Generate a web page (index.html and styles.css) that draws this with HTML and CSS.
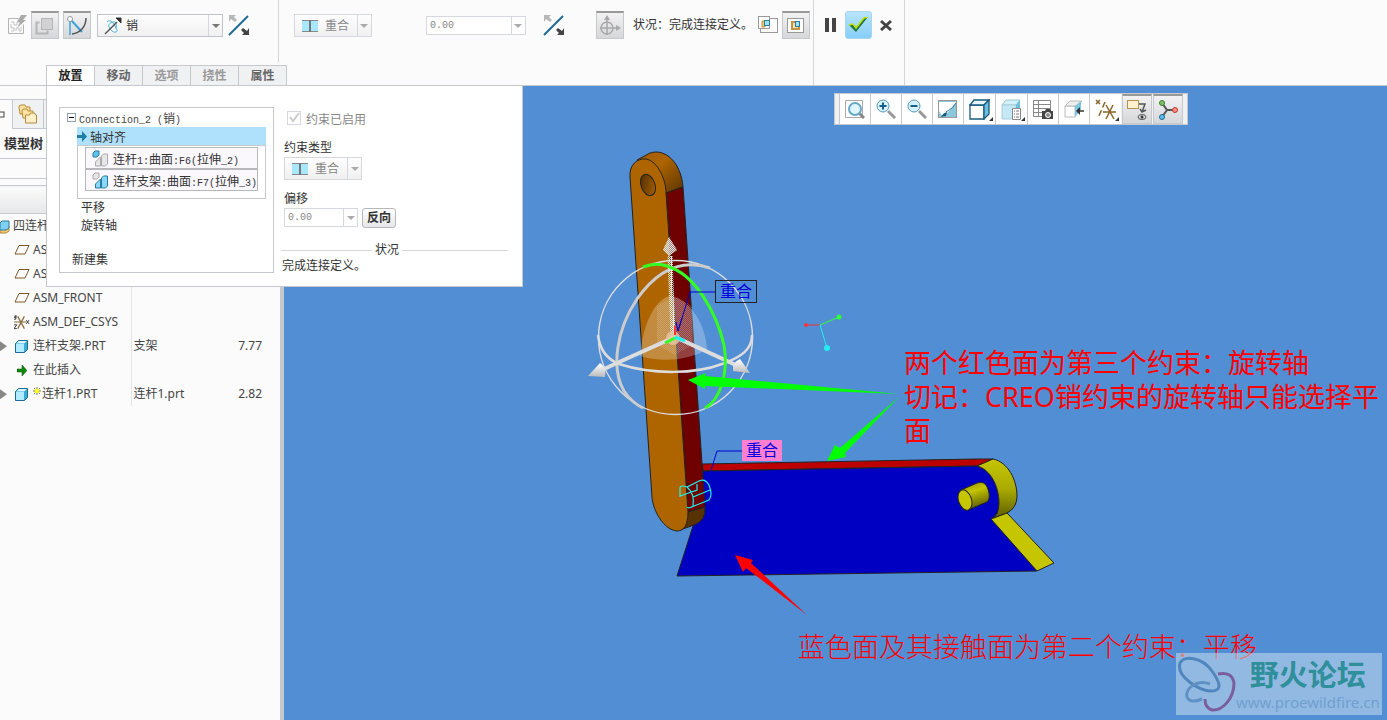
FILE: index.html
```html
<!DOCTYPE html>
<html lang="zh-CN">
<head>
    <meta charset="UTF-8">
    <meta name="viewport" content="width=device-width, initial-scale=1.0">
    <title>元件放置</title>
    <link rel="stylesheet" href="styles.css">
</head>
<body>
    <!-- 操控板 -->
    <header class="ribbon">
        <div class="dash">
            <div class="tools">
                <div class="tool-group first">
                    <button class="tool flat" type="button" aria-label="使用界面放置" disabled>
                        <svg width="20" height="20" viewBox="0 0 20 20" fill="none" stroke="#b4b4b4"><path d="M1.500 3.500h10M1.500 3.500v15h15v-9"/><path d="M4 7h3v3h3V7h3M4 16h3v-3H4V9M9 16v-3h3v3h2v-4" stroke="#c4c4c4"/><path d="M14 0h6l-4 5h3l-9 8 3-6h-3z" fill="#aaa" stroke="none"/></svg>
                    </button>
                    <button class="tool on" type="button" aria-label="手动放置">
                        <svg width="20" height="20" viewBox="0 0 20 20" fill="none" stroke="#b5b5b8"><path d="M4.500 6.500h-3v11h11v-3" stroke-width="2"/><rect x="6.500" y="2.500" width="11" height="11" fill="#d2d2d5"/></svg>
                    </button>
                    <button class="tool on" type="button" aria-label="机构连接">
                        <svg width="20" height="20" viewBox="0 0 20 20" fill="none"><path d="M3 5v14" stroke="#35a5d8" stroke-width="1.500"/><path d="M4 4l11 12" stroke="#35a5d8" stroke-width="2"/><path d="M19 2c0 9-6 15-14 16" stroke="#555" stroke-width="1.500"/><circle cx="3" cy="3" r="2.500" fill="#fff" stroke="#999"/></svg>
                    </button>
                    <div class="combo joint">
                        <svg width="18" height="18" viewBox="0 0 18 18" fill="none"><path d="M3 5c3-3 6 0 8 4s3 5 1 6-6-2-7-5 1-4 4-5 4 3 3 7" stroke="#4ab4dc"/><path d="M1 17L13 5" stroke="#555" stroke-width="1.500"/><path d="M12 1h5v5z" fill="#333" stroke="#333"/></svg>
                        <select aria-label="连接类型"><option>销</option></select>
                        <span class="arrow"></span>
                    </div>
                    <button class="tool flat" type="button" aria-label="反向">
                        <svg width="22" height="22" viewBox="0 0 22 22"><path d="M1 21L20 2" stroke="#1d6a92" stroke-width="2"/><path d="M1 1h7L6 3l3 3-2 2-4-3-2 3z" fill="#b8b8b8"/><path d="M21 21h-7l2-2-3-3 2-2 4 3 2-3z" fill="#444"/></svg>
                    </button>
                </div>
                <div class="tool-group">
                    <div class="combo coincide">
                        <svg width="16" height="12" viewBox="0 0 16 12"><path d="M0 0h16v12H0z" fill="#a8e8ff"/><path d="M0 .5h16M0 11.500h16" stroke="#888"/><path d="M8 0v12" stroke="#777" stroke-width="2"/></svg>
                        <select aria-label="约束类型" disabled><option>重合</option></select>
                        <span class="arrow"></span>
                    </div>
                    <div class="combo offset">
                        <input type="text" value="0.00" aria-label="偏移值" disabled>
                        <span class="arrow"></span>
                    </div>
                    <button class="tool flat" type="button" aria-label="反向约束">
                        <svg width="22" height="22" viewBox="0 0 22 22"><path d="M1 21L20 2" stroke="#1d6a92" stroke-width="2"/><path d="M1 1h7L6 3l3 3-2 2-4-3-2 3z" fill="#b8b8b8"/><path d="M21 21h-7l2-2-3-3 2-2 4 3 2-3z" fill="#444"/></svg>
                    </button>
                    <button class="tool on dragger" type="button" aria-label="3D 拖动器">
                        <svg width="22" height="22" viewBox="0 0 22 22" fill="none" stroke="#a8a8ab" stroke-width="1.500"><circle cx="8" cy="13" r="6"/><path d="M8 2v18M1 13h18"/><path d="M5 5l3-5 3 5zM17 10l5 3-5 3z" fill="#a8a8ab" stroke="none"/></svg>
                    </button>
                    <span class="status">状况：完成连接定义。</span>
                    <button class="tool flat small" type="button" aria-label="单独窗口">
                        <svg width="20" height="20" viewBox="0 0 20 20" stroke="#999"><rect x="2.500" y="3.500" width="17" height="14" fill="#fff"/><rect x=".5" y="1.500" width="11" height="12" fill="#fff"/><path d="M4 6h3v6H4z" fill="#f5c56b" stroke="#c79245"/><rect x="6.500" y="5.500" width="5" height="5" fill="#9fe3fa" stroke="#2b7d9e"/></svg>
                    </button>
                    <button class="tool on" type="button" aria-label="主窗口">
                        <svg width="20" height="20" viewBox="0 0 20 20"><rect x="1.500" y="2.500" width="16" height="14" fill="#fff" stroke="#999"/><rect x="6" y="6" width="7" height="7" fill="#ffe0a0" stroke="#c79245" stroke-width="2"/><rect x="9.500" y="5.500" width="4" height="5" fill="#9fe3fa" stroke="#2b7d9e"/></svg>
                    </button>
                </div>
            </div>
            <nav class="tabs" role="tablist">
                <button type="button" role="tab" class="active" aria-selected="true">放置</button>
                <button type="button" role="tab">移动</button>
                <button type="button" role="tab" disabled>选项</button>
                <button type="button" role="tab" disabled>挠性</button>
                <button type="button" role="tab">属性</button>
            </nav>
        </div>
        <div class="actions">
            <button type="button" aria-label="暂停"><svg width="12" height="14" viewBox="0 0 12 14"><path d="M0 0h4v14H0zM7 0h4v14H7z" fill="#444"/></svg></button>
            <button type="button" class="ok" aria-label="确定"><svg width="20" height="16" viewBox="0 0 20 16"><path d="M1 8l4-1 3 3 8-9 4-1L8 15z" fill="#1f7a43"/><path d="M1 8l4-1 3 4 8-10 4-1" fill="none" stroke="#c5e000" stroke-width="1.500"/></svg></button>
            <button type="button" aria-label="取消"><svg width="12" height="12" viewBox="0 0 12 12"><path d="M1 2l10 9M11 2L1 11" stroke="#444" stroke-width="3"/></svg></button>
        </div>

        <!-- 放置面板 -->
        <section class="placement">
            <div class="sets">
                <div class="set-head">
                    <svg width="9" height="9" viewBox="0 0 9 9"><rect x=".5" y=".5" width="8" height="8" fill="#fff" stroke="#8ba0b5"/><path d="M2 4.500h5" stroke="#000"/></svg>
                    <span><span class="lat">Connection_2 (</span>销<span class="lat">)</span></span>
                </div>
                <div class="selected">
                    <svg width="10" height="11" viewBox="0 0 10 11"><path d="M0 4h5V0l5 5.500L5 11V7H0z" fill="#1d7fa3"/></svg>
                    轴对齐
                </div>
                <ul class="refs">
                    <li>
                        <svg width="17" height="17" viewBox="0 0 17 17"><path d="M1 3l2-2h4v4L5 7H1z" fill="#5cc4ee" stroke="#2b7d9e"/><path d="M3.500 16v-4l5-5v9zM9.500 16V6l2-2h4v10l-2 2z" fill="#e6e6e6" stroke="#aaa"/></svg>
                        <span>连杆<span class="lat">1:</span>曲面<span class="lat">:F6(</span>拉伸<span class="lat">_2)</span></span>
                    </li>
                    <li>
                        <svg width="17" height="17" viewBox="0 0 17 17"><path d="M1 3l2-2h4v4L5 7H1z" fill="#e6e6e6" stroke="#aaa"/><path d="M3.500 16v-4l5-5v9zM9.500 16V6l2-2h4v10l-2 2z" fill="#8ad8f8" stroke="#2b7d9e"/></svg>
                        <span>连杆支架<span class="lat">:</span>曲面<span class="lat">:F7(</span>拉伸<span class="lat">_3)</span></span>
                    </li>
                </ul>
                <div class="entry">平移</div>
                <div class="entry">旋转轴</div>
                <div class="new-set">新建集</div>
            </div>
            <div class="params">
                <label class="enabled"><input type="checkbox" checked disabled>约束已启用</label>
                <label class="caption" for="constraintType">约束类型</label>
                <div class="combo coincide">
                    <svg width="16" height="12" viewBox="0 0 16 12"><path d="M0 0h16v12H0z" fill="#a8e8ff"/><path d="M0 .5h16M0 11.500h16" stroke="#888"/><path d="M8 0v12" stroke="#777" stroke-width="2"/></svg>
                    <select id="constraintType" disabled><option>重合</option></select>
                    <span class="arrow"></span>
                </div>
                <label class="caption second" for="offsetValue">偏移</label>
                <div class="offset-row">
                    <div class="combo offset">
                        <input type="text" id="offsetValue" value="0.00" disabled>
                        <span class="arrow"></span>
                    </div>
                    <button type="button" class="flip">反向</button>
                </div>
                <div class="rule">状况</div>
                <p class="result">完成连接定义。</p>
            </div>
        </section>
    </header>

    <main class="workspace">
        <!-- 模型树 -->
        <aside class="tree">
            <div class="tree-tabs">
                <button type="button" class="current" aria-label="模型树"><svg width="6" height="7" viewBox="0 0 6 7"><rect x="-1" y="1" width="5" height="5" fill="#fff" stroke="#444"/></svg></button>
                <button type="button" aria-label="文件夹浏览器">
                    <svg width="20" height="20" viewBox="0 0 20 20" fill="#ffe3a0" stroke="#b58a3c"><path d="M1 3q0-2 2-2h4l1 2h4v7H2z"/><path d="M4 7q0-2 2-2h3l1 2h5v7H5z"/><path d="M7.500 11h4l1-2h4l1 2h1v8h-11z" fill="#fff0c8"/></svg>
                </button>
                <button type="button" aria-label="收藏夹"></button>
            </div>
            <h2>模型树</h2>
            <div class="filter"></div>
            <table>
                <thead><tr><th></th><th></th><th></th></tr></thead>
                <tbody>
                    <tr>
                        <td class="root"><svg width="10" height="14" viewBox="0 0 10 14"><path d="M0 9h6l3-3v5l-3 2H0z" fill="#f5c56b" stroke="#b58a3c"/><path d="M0 3l2-2h7v7L6 10H0z" fill="#7fd0f2" stroke="#2b7d9e"/></svg>四连杆</td>
                        <td></td><td></td>
                    </tr>
                    <tr>
                        <td><svg class="plane" width="16" height="10" viewBox="0 0 16 10"><path d="M5 .5h10L11 9H1z" fill="none" stroke="#7a5a2a"/></svg>AS</td>
                        <td></td><td></td>
                    </tr>
                    <tr>
                        <td><svg class="plane" width="16" height="10" viewBox="0 0 16 10"><path d="M5 .5h10L11 9H1z" fill="none" stroke="#7a5a2a"/></svg>AS</td>
                        <td></td><td></td>
                    </tr>
                    <tr>
                        <td><svg class="plane" width="16" height="10" viewBox="0 0 16 10"><path d="M5 .5h10L11 9H1z" fill="none" stroke="#7a5a2a"/></svg>ASM_FRONT</td>
                        <td></td><td></td>
                    </tr>
                    <tr>
                        <td><svg class="plane" width="16" height="16" viewBox="0 0 17 16" fill="none"><path d="M0 8h13M4 2l7 13M11 2L4 15" stroke="#8a6a3a" stroke-width="1.300"/><path d="M0 1v2h2V1v4H0M0 11h3l-3 4h3M13 6l3 4M16 6l-3 4" stroke="#333"/></svg>ASM_DEF_CSYS</td>
                        <td></td><td></td>
                    </tr>
                    <tr>
                        <td><button type="button" class="expand" aria-label="展开"></button><svg class="part" width="13" height="13" viewBox="0 0 13 13"><path d="M.5 3.500l3-3h9v9l-3 3h-9z" fill="#3aa8d8" stroke="#1d6a92"/><path d="M1 4h8v8H1z" fill="#b0ecff"/><path d="M1 3.500L4 1h8L9 3.500z" fill="#d8f6ff"/></svg>连杆支架.PRT</td>
                        <td>支架</td><td>7.77</td>
                    </tr>
                    <tr>
                        <td><svg class="insert" width="10" height="11" viewBox="0 0 10 11"><path d="M0 4h5V0l5 5.500L5 11V7H0z" fill="#0a8a0a" stroke="#054d05" stroke-width=".5"/></svg>在此插入</td>
                        <td></td><td></td>
                    </tr>
                    <tr>
                        <td><button type="button" class="expand" aria-label="展开"></button><svg class="part" width="13" height="13" viewBox="0 0 13 13"><path d="M.5 3.500l3-3h9v9l-3 3h-9z" fill="#3aa8d8" stroke="#1d6a92"/><path d="M1 4h8v8H1z" fill="#b0ecff"/><path d="M1 3.500L4 1h8L9 3.500z" fill="#d8f6ff"/></svg><svg class="star" width="9" height="14" viewBox="0 0 9 14"><path d="M4 0v8M0 4h8M1 1l6 6M7 1L1 7" stroke="#777"/><path d="M2 2h4v4H2z" fill="#ff0"/></svg>连杆1.PRT</td>
                        <td>连杆1.prt</td><td>2.82</td>
                    </tr>
                </tbody>
            </table>
        </aside>

        <!-- 图形窗口 -->
        <section class="viewport">
            <svg class="scene" width="1103" height="634" viewBox="284 86 1103 634">
                <defs>
                    <linearGradient id="rim" x1="0" y1="0" x2="1" y2="1"><stop offset="0" stop-color="#a05c00"/><stop offset=".4" stop-color="#ae6500"/><stop offset="1" stop-color="#5a3400"/></linearGradient>
                    <linearGradient id="boss" x1="0" y1="0" x2="0" y2="1"><stop offset="0" stop-color="#c5c500"/><stop offset=".5" stop-color="#aaaa00"/><stop offset="1" stop-color="#5c5c00"/></linearGradient>
                    <linearGradient id="peg" x1="0" y1="0" x2=".3" y2="1"><stop offset="0" stop-color="#8a8a00"/><stop offset=".4" stop-color="#c5c500"/><stop offset="1" stop-color="#606000"/></linearGradient>
                    <linearGradient id="hole" x1="0" y1="0" x2="1" y2="1"><stop offset="0" stop-color="#4a2a00"/><stop offset="1" stop-color="#ae6500"/></linearGradient>
                    <linearGradient id="cone" x1="0" y1="0" x2="0" y2="1"><stop offset="0" stop-color="#fff"/><stop offset="1" stop-color="#bbb"/></linearGradient>
                    <pattern id="dots" width="2" height="2" patternUnits="userSpaceOnUse"><path d="M0 0h1v1H0zM1 1h1v1H1z" fill="#eee"/></pattern>
                </defs>
                <g stroke="#222" stroke-linejoin="round">
                    <!-- 连杆支架 -->
                    <path d="M702 464L977 459H993L977 466L703 471z" fill="#bc0000"/>
                    <path d="M703 471L977 466C992 471 999 486 999 503Q999 515 991 519L1037 571L677 576L693 526z" fill="#0000c2"/>
                    <path d="M977 466L993 459C1008 462 1017 480 1017 496Q1017 508 1007 513L991 519Q999 516 999 503C999 486 990 469 977 466z" fill="url(#boss)"/>
                    <path d="M991 519L1007 513L1054 563L1037 571z" fill="#c5c500"/>
                    <path d="M961 490L977 483Q985 480 988 489Q991 499 987 502L968 510z" fill="url(#peg)"/>
                    <ellipse cx="965" cy="500" rx="6.500" ry="10.500" transform="rotate(-18 965 500)" fill="#c5c500"/>
                    <!-- 连杆 -->
                    <path d="M637 160L650 153C665 148 681 162 683 187L666 193z" fill="url(#rim)"/>
                    <path d="M666 193L683 187L705 507L688 512z" fill="#6e0000"/>
                    <path d="M688 512L705 507Q706 521 694 525L680 530z" fill="#583300"/>
                    <path d="M630 177C629 165 637 158 646 159C658 161 666 180 666 193L688 512C688 525 684 531 677 531C664 530 653 511 652 497z" fill="#ae6500"/>
                    <ellipse cx="648" cy="185" rx="7" ry="11" transform="rotate(-20 648 185)" fill="url(#hole)"/>
                </g>
                <!-- 3D 拖动器 -->
                <path d="M640 356C643 325 653 302 669 296C690 298 706 325 707 350Q675 366 640 356z" fill="#fff" opacity=".25"/>
                <path d="M657 306L675 296L692 306V345L675 355L657 345z" fill="url(#dots)" opacity=".25"/>
                <g fill="none" stroke="#ddd">
                    <circle cx="675.500" cy="337.500" r="77" stroke-width="1.500"/>
                    <path d="M598 335C600 352 609 360 619 364C653 375 696 374 722 364C742 357 752 349 752 335" stroke-width="2.500"/>
                    <path d="M710 268C680 258 656 272 637 299C616 330 611 369 624 391Q632 403 643 408" stroke="#ccc" stroke-width="3"/>
                    <path d="M617 363L675 337L738 366" stroke-width="4"/>
                    <path d="M602 370L617 363" stroke-width="4"/>
                    <path d="M670 256L673 337" stroke="url(#dots)" stroke-width="5"/>
                    <path d="M671 256L674 337" stroke="#ddd" stroke-width="2" stroke-dasharray="1 1"/>
                    <path d="M643 267Q658 261 672 268C695 277 716 311 724 345C729 375 719 401 705 408" stroke="#3f2" stroke-width="3"/>
                </g>
                <path d="M669 237L663 250L669 256L677 250z" fill="url(#dots)"/>
                <path d="M669 237L663 250L669 256L677 250z" fill="#ddd" opacity=".55"/>
                <path d="M588 376L600 363Q607 367 605 377z" fill="url(#cone)"/>
                <path d="M750 373L740 359Q732 362 733 371z" fill="url(#cone)"/>
                <circle cx="673" cy="338" r="7" fill="#e8c8a8" opacity=".8"/>
                <path d="M675 326V335" stroke="#f33" stroke-width="2"/>
                <path d="M665 343L675 338" stroke="#3f2" stroke-width="3"/>
                <path d="M675 337L685 341" stroke="#2ee" stroke-width="3"/>
                <path d="M715 292H690L679 328M682 318L678 331L676 322" fill="none" stroke="#00c"/>
                <path d="M742 451H717L708 480M706 476L706 486L710 478" fill="none" stroke="#00c"/>
                <path d="M680 490Q679 484 687 487L699 481Q705 478 709 485Q713 495 709 500L694 506Q688 509 687 507M687 487Q695 494 693 506M680 496L697 490V484M680 488V497M693 497L710 490" fill="none" stroke="#2ee" stroke-width="1.200"/>
                <!-- 坐标系 -->
                <path d="M805 325H820" stroke="#e33"/><path d="M820 325L839 317" stroke="#3f3"/><path d="M820 325L827 348" stroke="#2ee"/>
                <circle cx="806" cy="325" r="2" fill="#f33"/><circle cx="839" cy="317" r="2.500" fill="#3f3"/><circle cx="827" cy="348" r="3" fill="#2ee"/>
                <!-- 标注箭头 -->
                <path d="M688 380L706 373L705 376L899 394L705 386V389z" fill="#0f0"/>
                <path d="M827 461L835 445L840 448L899 397L845 453L846 457z" fill="#0f0"/>
                <path d="M735 555L753 560L751 563L807 615L746 568L743 572z" fill="#f00"/>
            </svg>

            <div class="view-toolbar">
                <button type="button" aria-label="重新调整"><svg width="20" height="20" viewBox="0 0 20 20" fill="none"><path d="M.5 1.500h17M.5 1.500v17h17v-17" stroke="#aaa"/><path d="M14 14l5 5" stroke="#888" stroke-width="3"/><circle cx="10" cy="10" r="6" fill="#e0f6ff" stroke="#67a9c6" stroke-width="2"/></svg></button>
                <button type="button" aria-label="放大"><svg width="20" height="20" viewBox="0 0 20 20" fill="none"><path d="M12 12l7 7" stroke="#999" stroke-width="3"/><circle cx="7" cy="7" r="6" fill="#d5f2fd" stroke="#5a9ab8"/><path d="M3.500 7h7M7 3.500v7" stroke="#155f88" stroke-width="2"/></svg></button>
                <button type="button" aria-label="缩小"><svg width="20" height="20" viewBox="0 0 20 20" fill="none"><path d="M12 12l7 7" stroke="#999" stroke-width="3"/><circle cx="7" cy="7" r="6" fill="#d5f2fd" stroke="#5a9ab8"/><path d="M3.500 7h7" stroke="#155f88" stroke-width="2"/></svg></button>
                <button type="button" aria-label="重画"><svg width="20" height="20" viewBox="0 0 20 20"><rect x=".5" y="1.500" width="18" height="17" fill="#8cc8dc" stroke="#999"/><path d="M1 3h17Q13 11 5 18L1 12z" fill="#fff"/><path d="M3 18q2-4 6-5l-1 4z" fill="#14557a"/><path d="M8 13Q16 9 18 4" stroke="#3b7a98" fill="none"/></svg></button>
                <button type="button" class="more" aria-label="显示样式"><svg width="21" height="21" viewBox="0 0 21 21" stroke="#175a7e" stroke-width="1.300"><path d="M1 6h14v14H1z" fill="#fff"/><path d="M1 6l4-5h15l-5 5z" fill="#e5f6fc"/><path d="M15 6l5-5v14l-5 5z" fill="#6cc0e0"/></svg></button>
                <button type="button" class="more" aria-label="已保存方向"><svg width="21" height="21" viewBox="0 0 21 21"><path d="M1 6l4-5h14l-4 5z" fill="#d5f0fa" stroke="#9cc"/><path d="M1 6h14v14H1z" fill="#c4e8f5" stroke="#acd"/><path d="M15 6l4-5v9h-4z" fill="#6cc0e0"/><path d="M11.500 9.500h8v11h-8z" fill="#fff" stroke="#888"/><path d="M13 12h1M15 12h3M13 15h1M15 15h3M13 18h1M15 18h3" stroke="#777"/></svg></button>
                <button type="button" aria-label="视图管理器"><svg width="21" height="21" viewBox="0 0 21 21"><path d="M.5 1.500h17v16H.5zM.5 5.500h17M.5 9.500h17M.5 13.500h17M5.500 1.500v16" fill="#fff" stroke="#888"/><path d="M9 12h3l1-2h4l1 2h2v8H9z" fill="#444"/><circle cx="15" cy="16" r="2.500" fill="#888" stroke="#fff"/></svg></button>
                <button type="button" aria-label="截面"><svg width="21" height="21" viewBox="0 0 21 21"><path d="M1 7h10v11H1z" fill="#fff" stroke="#bbb"/><path d="M1 7l5-5h12l-6 5z" fill="#eee" stroke="#bbb"/><path d="M11 7l6-5v9l-6 7z" fill="#7cc6e2"/><path d="M20 12h-6" stroke="#333" stroke-width="1.500"/><path d="M12 12l4-4v8z" fill="#333"/></svg></button>
                <button type="button" class="more" aria-label="基准显示"><svg width="21" height="21" viewBox="0 0 21 21" fill="none" stroke="#8a6427" stroke-width="1.500"><path d="M1 1l4 4M5 1L1 5"/><path d="M10 3L3 19" stroke-dasharray="6 3"/><path d="M8 13h13M11 6l8 14M18 6l-7 14"/></svg></button>
                <button type="button" class="on" aria-label="注释显示"><svg width="21" height="21" viewBox="0 0 21 21" fill="none"><rect x=".5" y="1.500" width="11" height="8" fill="#fff2cc" stroke="#b5924f"/><path d="M12 5h6l-3 8M13 10l2 3 4-2" stroke="#555" stroke-width="1.500"/><ellipse cx="15" cy="18" rx="4" ry="2.500" stroke="#555"/><circle cx="15" cy="18" r="1.500" fill="#333"/></svg></button>
                <button type="button" class="on" aria-label="旋转中心"><svg width="21" height="21" viewBox="0 0 21 21"><path d="M4 4l5 7-5 7M9 11h8" fill="none" stroke="#555" stroke-width="2"/><circle cx="4" cy="4" r="2.500" fill="#7dc466" stroke="#3f7a32"/><circle cx="4" cy="18" r="2.500" fill="#62c0e8" stroke="#1d6a92"/><circle cx="17" cy="11" r="2.500" fill="#ff8a80" stroke="#c0392b"/></svg></button>
            </div>

            <span class="tag tag-upper">重合</span>
            <span class="tag tag-lower">重合</span>
            <p class="note note-rotate">两个红色面为第三个约束：旋转轴<br>切记：CREO销约束的旋转轴只能选择平<br>面</p>
            <p class="note note-move">蓝色面及其接触面为第二个约束：平移</p>

            <div class="watermark">
                <svg width="58" height="60" viewBox="0 0 58 60" fill="none"><path d="M2 10C6 2 24 4 34 18S43 38 33 38C22 38-2 24 2 10z" stroke="#4f86bd" stroke-width="3"/><path d="M32 31C18 26 7 36 9 44Q12 51 24 46" stroke="#5f92c4" stroke-width="3"/><path d="M40 21Q54 18 56 30C56 46 44 58 34 57Q27 55 27 46" stroke="#7a5f9c" stroke-width="3"/></svg>
                <div>
                    <strong>野火论坛</strong>
                    <span>www.proewildfire.cn</span>
                </div>
            </div>
        </section>
    </main>
</body>
</html>
```
FILE: styles.css
```css
* {
    box-sizing: border-box;
}
body {
    margin: 0;
    height: 100vh;
    display: flex;
    flex-direction: column;
    overflow: hidden;
    background-color: #fbfbfb;
    color: #333;
    font-family: "Liberation Sans", "Noto Sans CJK SC", sans-serif;
    font-size: 12px;
}
button, input, select {
    font-family: inherit;
    font-size: 12px;
    color: inherit;
    margin: 0;
    padding: 0;
    border: none;
    background: none;
}
svg {
    display: block;
    flex: none;
}
.lat {
    font-family: "Liberation Mono", monospace;
    font-size: 10px;
}

/* 操控板 */
.ribbon {
    position: relative;
    display: flex;
    flex: none;
    height: 86px;
    border-bottom: 1px solid #c5c8cc;
}
.dash {
    display: flex;
    flex-direction: column;
    justify-content: space-between;
    width: 814px;
    border-right: 1px solid #d5d6d8;
}
.tools {
    display: flex;
    height: 62px;
}
.tool-group {
    display: flex;
    align-items: flex-start;
    padding: 11px 3px 0 15px;
}
.tool-group.first {
    width: 279px;
    padding: 11px 0 0 3px;
    border-right: 1px solid #d5d6d8;
}
.tool {
    display: flex;
    align-items: center;
    justify-content: center;
    flex: none;
    width: 28px;
    height: 28px;
}
.tool.on, .view-toolbar .on {
    background: linear-gradient(#f2f2f3, #d6d7da);
    border: 1px solid #c5c8cc;
    border-top: 2px solid #999;
}
.tool.on + .tool.on {
    margin-left: 4px;
}
.tool.small {
    width: 20px;
    margin-right: 4px;
}
.combo {
    display: flex;
    align-items: center;
    height: 23px;
    background: linear-gradient(#fefefe, #f0f0f1);
    border: 1px solid #d5d8dc;
}
.combo svg {
    margin: 0 7px;
}
.combo select, .combo input {
    appearance: none;
    flex: 1;
    width: 20px;
    opacity: 1;
}
.combo :disabled {
    color: #888;
}
.combo .arrow {
    display: flex;
    align-items: center;
    justify-content: center;
    align-self: stretch;
    width: 14px;
    border-left: 1px solid #d5d8dc;
}
.arrow::after {
    content: "";
    border: 4px solid transparent;
    border-top-color: #aaa;
    border-bottom: none;
}
.joint {
    width: 126px;
    margin: 3px 2px 0 6px;
    border-color: #c0c4c8;
}
.combo.joint svg {
    margin: 0 4px 0 6px;
}
.joint .arrow::after {
    border-top-color: #777;
}
.coincide {
    width: 78px;
}
.tools .coincide {
    margin-top: 3px;
}
.offset {
    width: 74px;
    height: 19px;
    background: #fff;
}
.tools .offset {
    width: 100px;
    margin: 5px 14px 0 54px;
}
.offset input {
    padding-left: 3px;
    font-family: "Liberation Mono", monospace;
    font-size: 10px;
}
.dragger {
    margin-left: 28px;
}
.status {
    margin: 0 5px 0 9px;
    line-height: 28px;
    white-space: nowrap;
}
.tabs {
    display: flex;
    margin-left: 46px;
    height: 20px;
}
.tabs button {
    width: 49px;
    margin-right: -1px;
    background: #f0f1f3;
    border: 1px solid #c5c8cc;
    border-bottom: none;
    color: #666;
    font-weight: bold;
    line-height: 18px;
}
.tabs button:disabled {
    color: #999;
}
.tabs .active {
    background: #fff;
    color: #222;
}
.actions {
    display: flex;
    align-items: flex-start;
    padding: 11px 11px 0 10px;
    width: 91px;
    border-right: 1px solid #d5d6d8;
}
.actions button {
    display: flex;
    align-items: center;
    justify-content: center;
    width: 14px;
    height: 28px;
}
.actions .ok {
    width: 28px;
    margin: 0 7px;
    background: linear-gradient(#b8e4fd, #86cef8);
    border: 1px solid #a8d4ee;
    border-radius: 3px;
}

/* 放置面板 */
.placement {
    position: absolute;
    z-index: 2;
    top: 85px;
    left: 46px;
    display: flex;
    gap: 10px;
    width: 477px;
    padding: 21px 14px 12px 12px;
    background: #fff;
    border: 1px solid #c5c8cc;
}
.sets {
    width: 215px;
    height: 166px;
    border: 1px solid #c5c8cc;
}
.set-head, .selected {
    display: flex;
    align-items: center;
    height: 19px;
}
.set-head {
    gap: 3px;
    padding-left: 7px;
    color: #444;
}
.selected {
    gap: 3px;
    height: 18px;
    margin: 0 7px 0 17px;
    background: #afe1fd;
}
.refs {
    list-style: none;
    height: 54px;
    margin: 0 7px 0 17px;
    padding: 1px 7px;
    border: 1px solid #c5c8cc;
}
.refs li {
    display: flex;
    align-items: center;
    gap: 4px;
    height: 22px;
    padding-left: 6px;
    background: #faf7fd;
    border: 1px solid #b8b8bc;
    white-space: nowrap;
}
.entry {
    padding-left: 21px;
    line-height: 18px;
}
.new-set {
    padding: 16px 0 0 12px;
    line-height: 18px;
}
.params {
    flex: 1;
    margin-left: -1px;
}
.enabled {
    display: flex;
    align-items: center;
    gap: 5px;
    height: 22px;
    padding-left: 4px;
    color: #888;
}
.enabled input {
    appearance: none;
    width: 14px;
    height: 14px;
    border: 1px solid #d5d8dc;
    background: url("data:image/svg+xml,%3Csvg xmlns='http://www.w3.org/2000/svg' viewBox='0 0 12 12'%3E%3Cpath d='M2 5l3 4 6-8' fill='none' stroke='%23ccc' stroke-width='2'/%3E%3C/svg%3E");
}
.caption {
    display: block;
    margin-top: 10px;
    line-height: 18px;
}
.params .caption, .params > .combo, .offset-row {
    margin-left: 1px;
}
.offset-row {
    display: flex;
    gap: 4px;
}
.flip {
    width: 34px;
    height: 20px;
    border: 1px solid #b5b8bc;
    border-radius: 3px;
    background: linear-gradient(#fff, #e6e6e8);
    font-weight: bold;
    line-height: 16px;
}
.rule {
    display: flex;
    align-items: center;
    gap: 3px;
    margin: 14px 0 0 -2px;
    line-height: 16px;
}
.rule::before, .rule::after {
    content: "";
    border-top: 1px solid #d5d8dc;
}
.rule::before {
    width: 91px;
}
.rule::after {
    flex: 1;
}
.result {
    margin: 0 0 0 -1px;
    line-height: 16px;
}

/* 模型树 */
.workspace {
    display: flex;
    flex: 1;
    min-height: 0;
}
.tree {
    flex: none;
    width: 284px;
    border-right: 4px solid #c5c8cc;
    font-family: "Noto Sans", "Noto Sans CJK SC", sans-serif;
}
.tree-tabs {
    display: flex;
    height: 43px;
    padding-top: 13px;
}
.tree-tabs button {
    display: flex;
    align-items: center;
    justify-content: center;
    width: 31px;
    background: #f0f1f3;
    border: 1px solid #c5c8cc;
    border-right: none;
}
.tree-tabs .current {
    justify-content: flex-start;
    width: 12px;
    background: none;
    border-left: none;
    border-bottom: none;
}
.tree h2 {
    margin: 0;
    padding-left: 4px;
    font-size: 13px;
    line-height: 29px;
    border-bottom: 1px solid #c5c8cc;
}
.filter {
    height: 20px;
    margin-bottom: 6px;
    border-bottom: 1px solid #c5c8cc;
}
.tree table {
    width: 100%;
    table-layout: fixed;
    border-collapse: collapse;
}
.tree th {
    height: 28px;
    padding: 0;
    background: linear-gradient(#fbfbfb, #e6e7e9);
    border: 1px solid #c5c8cc;
    border-width: 1px 0;
}
.tree th:first-child {
    width: 131px;
}
.tree th:last-child {
    width: 68px;
}
.tree td {
    height: 24px;
    padding: 0 0 0 2px;
    color: #444;
    line-height: 22px;
    white-space: nowrap;
}
.tree td:first-child {
    padding: 0;
    border-right: 1px solid #e3e4e6;
}
.tree td:last-child {
    padding-right: 18px;
    text-align: right;
}
.tree td svg {
    display: inline-block;
    vertical-align: middle;
}
.tree .root svg {
    margin-right: 3px;
}
.tree .plane {
    margin: 0 3px 0 14px;
}
.expand {
    width: 7px;
    height: 10px;
    margin-right: 8px;
    vertical-align: middle;
    background: #888;
    clip-path: polygon(0 0, 100% 50%, 0 100%);
}
.tree .part {
    margin-right: 5px;
}
.tree .insert {
    margin: 0 6px 0 17px;
}

/* 图形窗口 */
.viewport {
    position: relative;
    flex: 1;
    overflow: hidden;
    background: #528ed4;
}
.scene {
    position: absolute;
    top: 0;
    left: 0;
}
.view-toolbar {
    position: absolute;
    top: 7px;
    left: 550px;
    display: flex;
    height: 32px;
    padding: 0 4px;
    background: #f0f1f3;
    border: 1px solid #c5c8cc;
}
.view-toolbar button {
    position: relative;
    display: flex;
    align-items: center;
    justify-content: center;
    width: 31px;
    background: #fff;
    border-left: 1px solid #c5c8cc;
}
.view-toolbar .on {
    width: 30px;
    margin-left: 1px;
}
.view-toolbar .more {
    width: 32px;
}
.view-toolbar .more::after {
    content: "";
    position: absolute;
    right: 2px;
    bottom: 3px;
    border: 2px solid #333;
    border-top-color: transparent;
    border-left-color: transparent;
}
.tag {
    position: absolute;
    padding: 0 4px;
    color: #0000e0;
    font-size: 16px;
    line-height: 21px;
}
.tag-upper {
    top: 194px;
    left: 431px;
    border: 1px solid #222;
}
.tag-lower {
    top: 354px;
    left: 458px;
    background: #ff80d0;
}
.note {
    position: absolute;
    margin: 0;
    color: #f00;
    font-family: "Noto Sans", "Noto Sans CJK SC", sans-serif;
    font-size: 27px;
    line-height: 34px;
    white-space: nowrap;
}
.note-rotate {
    top: 260px;
    left: 620px;
}
.note-move {
    top: 544px;
    left: 514px;
    font-weight: 300;
}
.watermark {
    position: absolute;
    right: 5px;
    bottom: 5px;
    display: flex;
    width: 206px;
    height: 62px;
    padding-left: 2px;
    background: rgba(190, 213, 235, 0.6);
}
.watermark div {
    display: flex;
    flex: 1;
    flex-direction: column;
    align-items: flex-end;
    padding-right: 4px;
    white-space: nowrap;
}
.watermark strong {
    padding-right: 14px;
    color: #2f8f9a;
    font-family: "Noto Sans CJK SC", sans-serif;
    font-size: 29px;
    line-height: 40px;
}
.watermark span {
    color: #6fa0d0;
    font-family: "Noto Sans", sans-serif;
    font-size: 15px;
    line-height: 18px;
}
```
